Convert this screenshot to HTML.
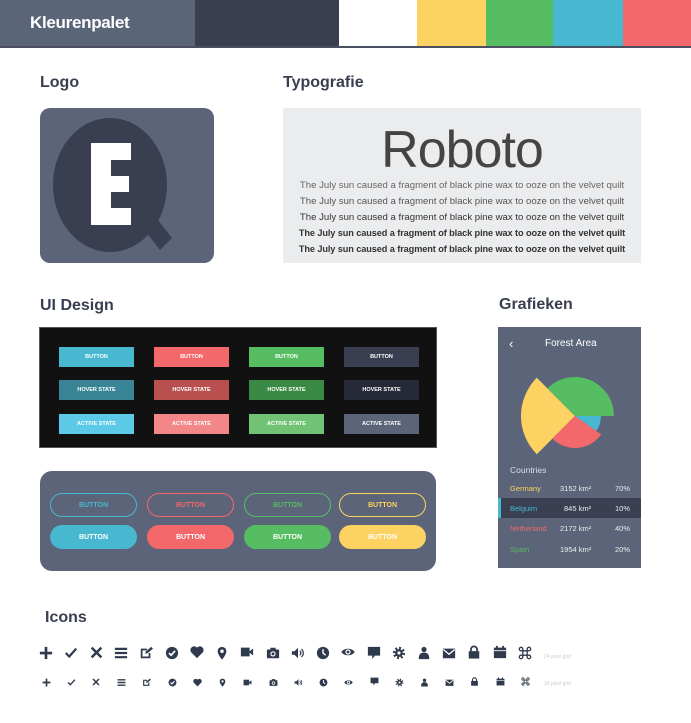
<!DOCTYPE html>
<html><head><meta charset="utf-8"><style>
*{margin:0;padding:0;box-sizing:border-box}
body{width:691px;height:723px;background:#fff;font-family:"Liberation Sans",sans-serif;position:relative;overflow:hidden}
.a{position:absolute}
h2{position:absolute;font-size:16px;font-weight:bold;color:#393e51}
.bt{position:absolute;width:75px;height:20px;color:#fff;font-size:5.5px;font-weight:bold;display:flex;align-items:center;justify-content:center}
.pb{position:absolute;width:87px;height:24px;border-radius:12px;font-size:7px;font-weight:bold;display:flex;align-items:center;justify-content:center}
.tl{position:absolute;left:283px;width:358px;text-align:center;font-size:9.6px;color:#333;white-space:nowrap}
.row{position:absolute;left:498px;width:143px;height:20px;font-size:7.5px}
.row span{position:absolute;top:6px}
svg.ic{position:absolute}
</style></head><body>
<div class="a" style="left:0;top:0;width:195px;height:46px;background:#5b6578"></div>
<div class="a" style="left:30px;top:13px;color:#fff;font-size:17px;font-weight:bold;letter-spacing:-0.3px">Kleurenpalet</div>
<div class="a" style="left:195px;top:0;width:144px;height:47px;background:#393e51"></div>
<div class="a" style="left:339px;top:0;width:78px;height:46px;background:#fff"></div>
<div class="a" style="left:417px;top:0;width:69px;height:46px;background:#fcd262"></div>
<div class="a" style="left:486px;top:0;width:67px;height:46px;background:#57bd63"></div>
<div class="a" style="left:553px;top:0;width:70px;height:46px;background:#47b8cf"></div>
<div class="a" style="left:623px;top:0;width:68px;height:46px;background:#f2686b"></div>
<div class="a" style="left:0;top:46px;width:691px;height:2px;background:#4a4f62"></div>

<h2 style="left:40px;top:74px">Logo</h2>
<h2 style="left:283px;top:74px">Typografie</h2>
<div class="a" style="left:40px;top:108px;width:174px;height:155px;background:#5b6478;border-radius:10px"></div>
<svg class="a" style="left:0;top:0" width="691" height="723">
<ellipse cx="110" cy="185" rx="57" ry="67" fill="#393e51"/>
<path d="M146 232 L158 220 L172 238 L160 250 Z" fill="#393e51"/>
<rect x="91" y="143" width="20" height="82" fill="#fff"/>
<rect x="91" y="143" width="40" height="17" fill="#fff"/>
<rect x="91" y="176" width="38" height="16" fill="#fff"/>
<rect x="91" y="208" width="40" height="17" fill="#fff"/>
<path d="M575 416 L536.8 454.2 A54 54 0 0 1 536.8 377.8 Z" fill="#fcd262"/>
<path d="M575 416 L547.4 388.4 A39 39 0 0 1 614 416 Z" fill="#57bd63"/>
<path d="M575 416 L601 416 A26 26 0 0 1 596.3 430.9 Z" fill="#47b8cf"/>
<path d="M575 416 L601.2 434.4 A32 32 0 0 1 552.4 438.6 Z" fill="#f2686b"/>
</svg>
<div class="a" style="left:283px;top:108px;width:358px;height:155px;background:#ebecee"></div>
<div class="tl" style="top:120px;font-size:52px;color:#444;font-weight:normal;line-height:60px;letter-spacing:-1px">Roboto</div>
<div class="tl" style="top:180px;color:#666">The July sun caused a fragment of black pine wax to ooze on the velvet quilt</div>
<div class="tl" style="top:196px;color:#555">The July sun caused a fragment of black pine wax to ooze on the velvet quilt</div>
<div class="tl" style="top:212px;color:#333">The July sun caused a fragment of black pine wax to ooze on the velvet quilt</div>
<div class="tl" style="top:228px;color:#333;font-weight:bold;font-size:9.2px;letter-spacing:-0.1px">The July sun caused a fragment of black pine wax to ooze on the velvet quilt</div>
<div class="tl" style="top:244px;color:#333;font-weight:bold;font-size:9.2px;letter-spacing:-0.1px">The July sun caused a fragment of black pine wax to ooze on the velvet quilt</div>

<h2 style="left:40px;top:297px">UI Design</h2>
<h2 style="left:499px;top:296px">Grafieken</h2>
<div class="a" style="left:39px;top:327px;width:398px;height:121px;background:#111;border:1px solid #555"></div>
<div class="bt" style="left:59px;top:347px;background:#47b8cf">BUTTON</div>
<div class="bt" style="left:154px;top:347px;background:#f2686b">BUTTON</div>
<div class="bt" style="left:249px;top:347px;background:#57bd63">BUTTON</div>
<div class="bt" style="left:344px;top:347px;background:#393e51">BUTTON</div>
<div class="bt" style="left:59px;top:380px;background:#3a8595">HOVER STATE</div>
<div class="bt" style="left:154px;top:380px;background:#b85050">HOVER STATE</div>
<div class="bt" style="left:249px;top:380px;background:#3a8a45">HOVER STATE</div>
<div class="bt" style="left:344px;top:380px;background:#262a38">HOVER STATE</div>
<div class="bt" style="left:59px;top:414px;background:#5ccae6">ACTIVE STATE</div>
<div class="bt" style="left:154px;top:414px;background:#f38687">ACTIVE STATE</div>
<div class="bt" style="left:249px;top:414px;background:#72c275">ACTIVE STATE</div>
<div class="bt" style="left:344px;top:414px;background:#5b6478">ACTIVE STATE</div>

<div class="a" style="left:40px;top:471px;width:396px;height:100px;background:#5b6478;border-radius:12px"></div>
<div class="pb" style="left:50px;top:493px;border:1.5px solid #47b8cf;color:#47b8cf">BUTTON</div>
<div class="pb" style="left:147px;top:493px;border:1.5px solid #f2686b;color:#f2686b">BUTTON</div>
<div class="pb" style="left:244px;top:493px;border:1.5px solid #57bd63;color:#57bd63">BUTTON</div>
<div class="pb" style="left:339px;top:493px;border:1.5px solid #fcd262;color:#fcd262">BUTTON</div>
<div class="pb" style="left:50px;top:525px;background:#47b8cf;color:#fff">BUTTON</div>
<div class="pb" style="left:147px;top:525px;background:#f2686b;color:#fff">BUTTON</div>
<div class="pb" style="left:244px;top:525px;background:#57bd63;color:#fff">BUTTON</div>
<div class="pb" style="left:339px;top:525px;background:#fcd262;color:#fff">BUTTON</div>

<div class="a" style="left:498px;top:327px;width:143px;height:241px;background:#5b6478;z-index:-1"></div>
<div class="a" style="left:509px;top:336px;color:#fff;font-size:13px">‹</div>
<div class="a" style="left:545px;top:338px;color:#fff;font-size:10px">Forest Area</div>
<div class="a" style="left:510px;top:465px;color:#dde;font-size:8.5px">Countries</div>
<div class="row" style="top:478px"><span style="left:12px;color:#fcd262">Germany</span><span style="left:62px;color:#eee">3152 km²</span><span style="left:117px;color:#eee">70%</span></div>
<div class="row" style="top:498px;background:#3a3f51;border-left:3px solid #47b8cf"><span style="left:9px;color:#47b8cf">Belguim</span><span style="left:63px;color:#eee">845 km²</span><span style="left:114px;color:#eee">10%</span></div>
<div class="row" style="top:518px"><span style="left:12px;color:#f2686b">Netherland</span><span style="left:62px;color:#eee">2172 km²</span><span style="left:117px;color:#eee">40%</span></div>
<div class="row" style="top:539px"><span style="left:12px;color:#57bd63">Spain</span><span style="left:62px;color:#eee">1954 km²</span><span style="left:117px;color:#eee">20%</span></div>

<h2 style="left:45px;top:609px">Icons</h2>
<svg width="0" height="0" style="position:absolute">
<defs>
<symbol id="i1" viewBox="0 0 16 16"><path d="M6.5 1h3v5.5H15v3H9.5V15h-3V9.5H1v-3h5.5z"/></symbol>
<symbol id="i2" viewBox="0 0 16 16"><polyline points="2,8 6,12 14,3" fill="none" stroke="currentColor" stroke-width="2.5"/></symbol>
<symbol id="i3" viewBox="0 0 16 16"><path d="M2 2L14 14M14 2L2 14" stroke="currentColor" stroke-width="3"/></symbol>
<symbol id="i4" viewBox="0 0 16 16"><path d="M1 2h14v2.5H1zM1 6.75h14v2.5H1zM1 11.5h14V14H1z"/></symbol>
<symbol id="i5" viewBox="0 0 16 16"><path d="M2 3h7v2H4v7h7V8h2v6H2z"/><path d="M7 9l1-3 6-5 2 2-6 5z"/></symbol>
<symbol id="i6" viewBox="0 0 16 16"><circle cx="8" cy="8" r="7"/><polyline points="4.5,8 7,10.5 11.5,5.5" fill="none" stroke="#fff" stroke-width="2"/></symbol>
<symbol id="i7" viewBox="0 0 16 16"><path d="M8 15L1.5 8.5A3.8 3.8 0 0 1 8 3a3.8 3.8 0 0 1 6.5 5.5z"/></symbol>
<symbol id="i8" viewBox="0 0 16 16"><path d="M8 1a5 5 0 0 0-5 5c0 4 5 9.5 5 9.5s5-5.5 5-9.5a5 5 0 0 0-5-5z"/><circle cx="8" cy="6" r="2" fill="#fff"/></symbol>
<symbol id="i9" viewBox="0 0 16 16"><rect x="1" y="3" width="10" height="10"/><path d="M10 8l5-4v8z"/></symbol>
<symbol id="i10" viewBox="0 0 16 16"><rect x="1" y="4" width="14" height="10" rx="1"/><rect x="5" y="2" width="6" height="3"/><circle cx="8" cy="9" r="3" fill="#fff"/><circle cx="8" cy="9" r="1.7"/></symbol>
<symbol id="i11" viewBox="0 0 16 16"><path d="M1 6h3l4-4v12l-4-4H1z"/><path d="M10 5.5a3 3 0 0 1 0 5M12 3.5a6 6 0 0 1 0 9" fill="none" stroke="currentColor" stroke-width="1.4"/></symbol>
<symbol id="i12" viewBox="0 0 16 16"><circle cx="8" cy="8" r="7"/><path d="M8 3.5V8l3 2.5" fill="none" stroke="#fff" stroke-width="1.6"/></symbol>
<symbol id="i13" viewBox="0 0 16 16"><path d="M0.5 8C3 3 13 3 15.5 8C13 13 3 13 0.5 8z"/><circle cx="8" cy="8" r="3" fill="#fff"/><circle cx="8" cy="8" r="1.6"/></symbol>
<symbol id="i14" viewBox="0 0 16 16"><path d="M1 1h14v10H9l-3 4v-4H1z"/></symbol>
<symbol id="i15" viewBox="0 0 16 16"><circle cx="8" cy="8" r="5.5" fill="none" stroke="currentColor" stroke-width="3" stroke-dasharray="2.2 2.1"/><circle cx="8" cy="8" r="4.5"/><circle cx="8" cy="8" r="1.8" fill="#fff"/></symbol>
<symbol id="i16" viewBox="0 0 16 16"><circle cx="8" cy="4" r="3"/><path d="M2 15c0-6 2-7.5 6-7.5s6 1.5 6 7.5z"/></symbol>
<symbol id="i17" viewBox="0 0 16 16"><rect x="1" y="3" width="14" height="11"/><polyline points="1.5,4 8,9.5 14.5,4" fill="none" stroke="#fff" stroke-width="1.5"/></symbol>
<symbol id="i18" viewBox="0 0 16 16"><path d="M4.5 7V5a3.5 3.5 0 0 1 7 0v2" fill="none" stroke="currentColor" stroke-width="2"/><rect x="2" y="7" width="12" height="8.5"/></symbol>
<symbol id="i19" viewBox="0 0 16 16"><rect x="1" y="3" width="14" height="12"/><rect x="1" y="6" width="14" height="1" fill="#fff"/><rect x="3.5" y="1" width="2" height="3"/><rect x="10.5" y="1" width="2" height="3"/></symbol>
<symbol id="i20" viewBox="0 0 16 16"><path d="M5.5 5.5h5v5h-5zM5.5 5.5V3.5a2 2 0 1 0-2 2h2M10.5 5.5V3.5a2 2 0 1 1 2 2h-2M5.5 10.5v2a2 2 0 1 1-2-2h2M10.5 10.5v2a2 2 0 1 0 2-2h-2" fill="none" stroke="currentColor" stroke-width="1.5"/></symbol>
</defs></svg>
<div class="a" style="left:0;top:0;color:#2f3a4c">
<svg class="ic" style="left:39px;top:646px" width="14" height="14" fill="currentColor"><use href="#i1"/></svg>
<svg class="ic" style="left:64px;top:646px" width="14" height="14" fill="currentColor"><use href="#i2"/></svg>
<svg class="ic" style="left:90px;top:646px" width="13" height="13" fill="currentColor"><use href="#i3"/></svg>
<svg class="ic" style="left:114px;top:646px" width="14" height="14" fill="currentColor"><use href="#i4"/></svg>
<svg class="ic" style="left:139px;top:646px" width="14" height="14" fill="currentColor"><use href="#i5"/></svg>
<svg class="ic" style="left:165px;top:646px" width="14" height="14" fill="currentColor"><use href="#i6"/></svg>
<svg class="ic" style="left:190px;top:645px" width="14" height="14" fill="currentColor"><use href="#i7"/></svg>
<svg class="ic" style="left:215px;top:646px" width="14" height="14" fill="currentColor"><use href="#i8"/></svg>
<svg class="ic" style="left:240px;top:645px" width="14" height="14" fill="currentColor"><use href="#i9"/></svg>
<svg class="ic" style="left:266px;top:646px" width="14" height="14" fill="currentColor"><use href="#i10"/></svg>
<svg class="ic" style="left:291px;top:646px" width="14" height="14" fill="currentColor"><use href="#i11"/></svg>
<svg class="ic" style="left:316px;top:646px" width="14" height="14" fill="currentColor"><use href="#i12"/></svg>
<svg class="ic" style="left:341px;top:645px" width="14" height="14" fill="currentColor"><use href="#i13"/></svg>
<svg class="ic" style="left:367px;top:646px" width="14" height="14" fill="currentColor"><use href="#i14"/></svg>
<svg class="ic" style="left:392px;top:646px" width="14" height="14" fill="currentColor"><use href="#i15"/></svg>
<svg class="ic" style="left:417px;top:646px" width="14" height="14" fill="currentColor"><use href="#i16"/></svg>
<svg class="ic" style="left:442px;top:646px" width="14" height="14" fill="currentColor"><use href="#i17"/></svg>
<svg class="ic" style="left:467px;top:645px" width="14" height="14" fill="currentColor"><use href="#i18"/></svg>
<svg class="ic" style="left:493px;top:645px" width="14" height="14" fill="currentColor"><use href="#i19"/></svg>
<svg class="ic" style="left:518px;top:646px" width="14" height="14" fill="currentColor"><use href="#i20"/></svg>
<div class="a" style="left:544px;top:654px;font-size:5px;color:#ccc;white-space:nowrap">24 pixel grid</div>

<svg class="ic" style="left:42px;top:678px" width="9" height="9" fill="currentColor"><use href="#i1"/></svg>
<svg class="ic" style="left:67px;top:678px" width="9" height="9" fill="currentColor"><use href="#i2"/></svg>
<svg class="ic" style="left:92px;top:678px" width="8" height="8" fill="currentColor"><use href="#i3"/></svg>
<svg class="ic" style="left:117px;top:678px" width="9" height="9" fill="currentColor"><use href="#i4"/></svg>
<svg class="ic" style="left:142px;top:678px" width="9" height="9" fill="currentColor"><use href="#i5"/></svg>
<svg class="ic" style="left:168px;top:678px" width="9" height="9" fill="currentColor"><use href="#i6"/></svg>
<svg class="ic" style="left:193px;top:678px" width="9" height="9" fill="currentColor"><use href="#i7"/></svg>
<svg class="ic" style="left:218px;top:678px" width="9" height="9" fill="currentColor"><use href="#i8"/></svg>
<svg class="ic" style="left:243px;top:678px" width="9" height="9" fill="currentColor"><use href="#i9"/></svg>
<svg class="ic" style="left:269px;top:678px" width="9" height="9" fill="currentColor"><use href="#i10"/></svg>
<svg class="ic" style="left:294px;top:678px" width="9" height="9" fill="currentColor"><use href="#i11"/></svg>
<svg class="ic" style="left:319px;top:678px" width="9" height="9" fill="currentColor"><use href="#i12"/></svg>
<svg class="ic" style="left:344px;top:678px" width="9" height="9" fill="currentColor"><use href="#i13"/></svg>
<svg class="ic" style="left:370px;top:677px" width="9" height="9" fill="currentColor"><use href="#i14"/></svg>
<svg class="ic" style="left:395px;top:678px" width="9" height="9" fill="currentColor"><use href="#i15"/></svg>
<svg class="ic" style="left:420px;top:678px" width="9" height="9" fill="currentColor"><use href="#i16"/></svg>
<svg class="ic" style="left:445px;top:678px" width="9" height="9" fill="currentColor"><use href="#i17"/></svg>
<svg class="ic" style="left:470px;top:677px" width="9" height="9" fill="currentColor"><use href="#i18"/></svg>
<svg class="ic" style="left:496px;top:677px" width="9" height="9" fill="currentColor"><use href="#i19"/></svg>
<svg class="ic" style="left:521px;top:677px" width="9" height="9" fill="currentColor"><use href="#i20"/></svg>
<div class="a" style="left:544px;top:681px;font-size:5px;color:#ccc;white-space:nowrap">16 pixel grid</div>
</div>
</body></html>
